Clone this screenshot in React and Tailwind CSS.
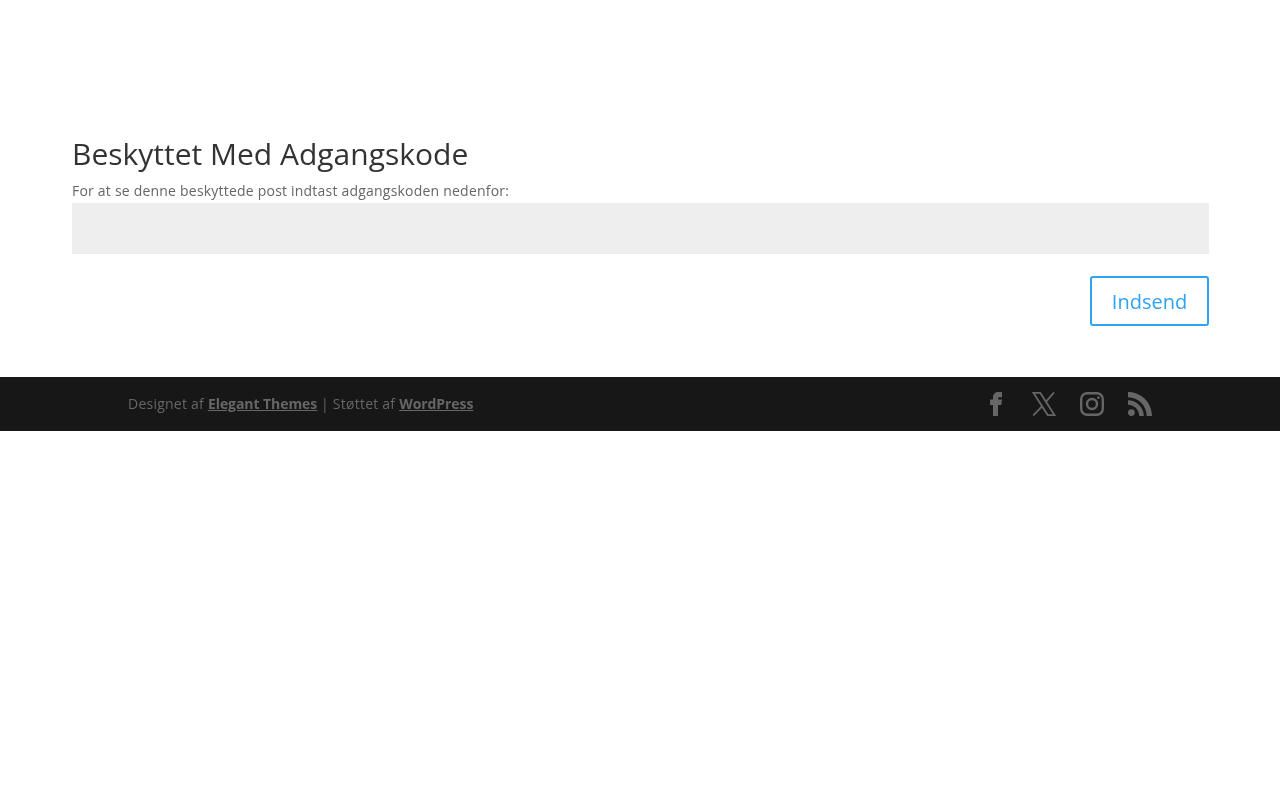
import React from 'react';

const FacebookIcon = () => (
  <svg width="24" height="24" viewBox="0 0 24 24" fill="#666666">
    <path d="M9 24V13H6V7.500H9V5.500C9 2 11.200 0 14.500 0c1.500 0 3 .1 3.500.2v5h-2.300C14.500 5.200 14 5.800 14 7v.5h4l-.7 5.500H14v11z" />
  </svg>
);

const XIcon = () => (
  <svg width="24" height="24" viewBox="0 0 24 24" fill="none" stroke="#666666" strokeWidth="1.800">
    <path d="M1.500 0.900h6.800L22.500 23.100h-6.800z" />
    <path d="M22 0.500L13.600 10.200M10.600 13.800L1.200 23.500" />
  </svg>
);

const InstagramIcon = () => (
  <svg width="24" height="24" viewBox="0 0 24 24" fill="none" stroke="#666666" strokeWidth="2.400">
    <rect x="1.200" y="1.200" width="21.600" height="21.600" rx="6" />
    <circle cx="12" cy="12" r="5" />
    <circle cx="18.400" cy="5.600" r="1.400" fill="#666666" stroke="none" />
  </svg>
);

const RssIcon = () => (
  <svg width="24" height="24" viewBox="0 0 24 24" fill="#666666">
    <circle cx="3.400" cy="20.600" r="3.400" />
    <path d="M0 8.200v4.600c6.200 0 11.200 5 11.200 11.200h4.600C15.800 15.300 8.700 8.200 0 8.200z" />
    <path d="M0 0v5.300c10.300 0 18.700 8.400 18.700 18.700H24C24 10.700 13.300 0 0 0z" />
  </svg>
);

export default function App() {
  return (
    <div className="min-h-[800px] bg-white font-['Open_Sans',sans-serif]">
      <main className="pl-[72px] pr-[71px] pt-[133px] pb-[51px] will-change-transform">
        <h1 className="text-[30px] leading-[42px] text-[#333333]">Beskyttet Med Adgangskode</h1>
        <p className="text-sm leading-[26px] tracking-[0.21px] text-[#666666] mt-[3px] -mb-px">
          For at se denne beskyttede post indtast adgangskoden nedenfor:
        </p>
        <input type="password" className="block w-full h-[51px] bg-[#eeeeee]" />
        <div className="flex justify-end mt-[22px]">
          <button className="h-[50px] w-[119px] pt-px border-2 border-[#2ea3f2] rounded-[3px] text-[20px] text-[#2ea3f2]">
            Indsend
          </button>
        </div>
      </main>
      <footer className="h-[54px] bg-[#171717] flex items-center justify-between pl-[128px] pr-[128px]">
        <p className="text-sm tracking-[0.24px] text-[#666666] will-change-transform">
          Designet af <a className="font-bold underline tracking-[-0.07px]">Elegant Themes</a> | Støttet af{' '}
          <a className="font-bold underline tracking-[-0.07px]">WordPress</a>
        </p>
        <div className="flex items-center gap-6">
          <FacebookIcon />
          <XIcon />
          <InstagramIcon />
          <RssIcon />
        </div>
      </footer>
    </div>
  );
}
